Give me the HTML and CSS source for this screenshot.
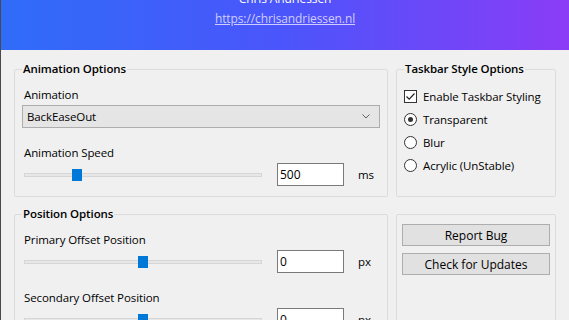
FILE: index.html
```html
<!DOCTYPE html>
<html lang="en">
<head>
    <meta charset="UTF-8">
    <title>Taskbar Settings</title>
    <link rel="stylesheet" href="styles.css">
</head>
<body>

<div class="window">
    <div class="header">
        <div class="author">Chris Andriessen</div>
        <a class="site" href="#">https://chrisandriessen.nl</a>
    </div>

    <div class="content">
        <fieldset class="group">
            <legend>Animation Options</legend>
            <div class="label first">Animation</div>
            <div class="combo">
                <span>BackEaseOut</span>
                <svg width="8" height="5" viewBox="0 0 8 5"><path d="M0.5 0.5 L4 4 L7.5 0.5" fill="none" stroke="#606060" stroke-width="1"/></svg>
            </div>
            <div class="label">Animation Speed</div>
            <div class="slider-row">
                <div class="slider"><div class="thumb" style="left: 48px"></div></div>
                <input class="num" type="text" value="500">
                <span class="unit">ms</span>
            </div>
        </fieldset>

        <fieldset class="group side">
            <legend>Taskbar Style Options</legend>
            <label class="option first"><span class="check"><svg width="11" height="11" viewBox="0 0 11 11"><path d="M1.5 5.5 L4.2 8.2 L9.5 2.5" fill="none" stroke="#222" stroke-width="1.2"/></svg></span>Enable Taskbar Styling</label>
            <label class="option"><span class="radio on"></span>Transparent</label>
            <label class="option"><span class="radio"></span>Blur</label>
            <label class="option"><span class="radio"></span>Acrylic (UnStable)</label>
        </fieldset>

        <fieldset class="group">
            <legend>Position Options</legend>
            <div class="label first">Primary Offset Position</div>
            <div class="slider-row">
                <div class="slider"><div class="thumb" style="left: 114px"></div></div>
                <input class="num" type="text" value="0">
                <span class="unit">px</span>
            </div>
            <div class="label">Secondary Offset Position</div>
            <div class="slider-row">
                <div class="slider"><div class="thumb" style="left: 114px"></div></div>
                <input class="num" type="text" value="0">
                <span class="unit">px</span>
            </div>
        </fieldset>

        <fieldset class="group side actions">
            <button>Report Bug</button>
            <button>Check for Updates</button>
        </fieldset>
    </div>
</div>

</body>
</html>
```

FILE: styles.css
```css
body {
    margin: 0;
    font-family: "Open Sans", "Noto Sans", Arial, sans-serif;
    font-size: 11.5px;
    letter-spacing: -0.1px;
    color: #000;
    background-color: #f0f0f0;
    overflow: hidden;
}
.window {
    width: 568px;
    height: 320px;
    border-left: 1px solid #4a4a4a;
    overflow: hidden;
}
.header {
    height: 59px;
    margin-top: -9px;
    background: linear-gradient(90deg, #2f6cf8 0%, #4b55fb 50%, #8b3cf6 100%);
    display: flex;
    flex-direction: column;
    align-items: center;
    color: white;
    font-size: 12px;
    line-height: 16px;
}
.author {
    color: #ffffff;
}
.site {
    color: #d0cdff;
    margin-top: 4px;
    text-decoration: underline;
}
.content {
    display: grid;
    grid-template-columns: 374px 160px;
    column-gap: 8px;
    row-gap: 9px;
    padding: 11px 0 0 13px;
}
.group {
    margin: 0;
    border: 1px solid #dcdcdc;
    border-radius: 2px;
    padding: 0 7px;
    min-width: 0;
}
.group legend {
    padding: 0 1px;
    margin-left: 0;
    font-weight: 600;
    line-height: 16px;
}
.label {
    margin: 17px 0 2px 2px;
    line-height: 16px;
}
.label.first {
    margin-top: 10px;
}
.combo {
    height: 21px;
    border: 1px solid #adadad;
    background-color: #e5e5e5;
    display: flex;
    align-items: center;
    justify-content: space-between;
    padding: 0 9px 0 4px;
}
.slider-row {
    display: flex;
    align-items: center;
    height: 23px;
    margin-bottom: 10px;
}
.slider {
    position: relative;
    width: 238px;
    height: 12px;
    margin-left: 2px;
}
.slider::before {
    content: "";
    position: absolute;
    left: 0;
    right: 0;
    top: 4px;
    height: 2px;
    background-color: #e7e7e7;
    border: 1px solid #d6d6d6;
}
.thumb {
    position: absolute;
    top: 0;
    width: 10px;
    height: 12px;
    background-color: #0078d7;
}
.num {
    width: 63px;
    height: 21px;
    box-sizing: content-box;
    margin: 0 0 0 15px;
    padding: 0 0 0 2px;
    border: 1px solid #7a7a7a;
    background: white;
    font: inherit;
    font-size: 12px;
    color: #000;
    outline: none;
}
.unit {
    margin-left: 14px;
}
.option {
    display: flex;
    align-items: center;
    height: 16px;
    margin-top: 7px;
}
.option.first {
    margin-top: 11px;
}
.check {
    width: 11px;
    height: 11px;
    border: 1px solid #333;
    background: white;
    margin-right: 6px;
    display: flex;
}
.radio {
    width: 11px;
    height: 11px;
    border: 1px solid #333;
    border-radius: 50%;
    background: white;
    margin-right: 6px;
    display: flex;
    align-items: center;
    justify-content: center;
}
.radio.on::after {
    content: "";
    width: 5px;
    height: 5px;
    border-radius: 50%;
    background-color: #333;
}
.actions {
    margin-top: 8px;
    padding: 9px 5px 0;
}
.actions button {
    display: block;
    width: 148px;
    height: 22px;
    margin-bottom: 7px;
    border: 1px solid #adadad;
    background-color: #e1e1e1;
    font: inherit;
    font-size: 12px;
    color: #000;
}
```
